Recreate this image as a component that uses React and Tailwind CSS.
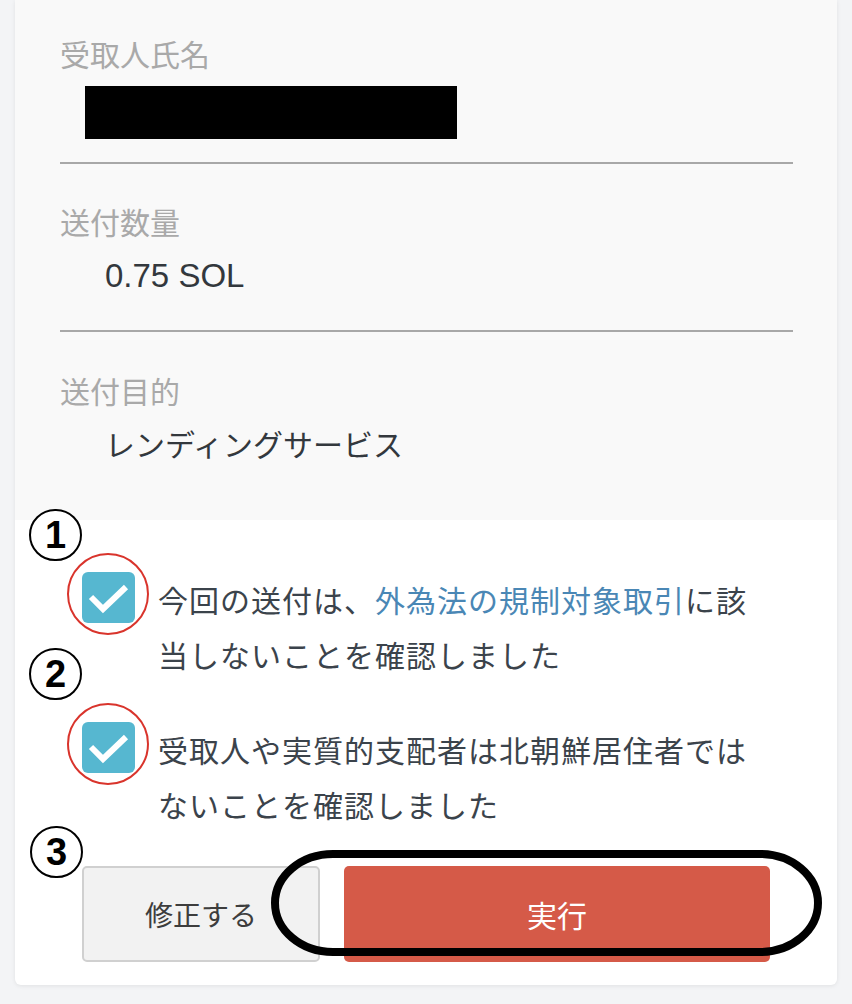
import React from "react";

const jp = "font-['Noto_Sans_CJK_JP',sans-serif]";

function Marker({ n, className }) {
  return (
    <div
      className={`absolute flex h-[52px] w-[53px] items-center justify-center rounded-full border-2 border-black bg-white font-['Liberation_Sans',sans-serif] text-[38px] font-bold leading-none text-black ${className}`}
    >
      {n}
    </div>
  );
}

function CheckBox() {
  return (
    <div className="relative h-[51px] w-[53px] shrink-0">
      <div className="h-full w-full rounded-[6px] bg-[#56b7d0]">
        <svg width="53" height="51" viewBox="0 0 53 51">
          <polyline
            points="9,25 21,37 44,15"
            fill="none"
            stroke="white"
            strokeWidth="6"
            strokeLinejoin="miter"
          />
        </svg>
      </div>
      <div className="absolute left-[-15px] top-[-19px] h-[82px] w-[82px] rounded-full border-2 border-[#d9342c]" />
    </div>
  );
}

function Label({ children, className = "" }) {
  return (
    <div className={`text-[30px] leading-[40px] text-[#a9a9a9] ${jp} ${className}`}>{children}</div>
  );
}

export default function App() {
  return (
    <div className="min-h-screen w-full bg-[#f3f4f6] pb-[18px]">
      <div className="relative mx-[15px] rounded-b-[6px] bg-white shadow-[0_1px_4px_rgba(0,0,0,0.08)]">
        {/* details */}
        <div className="bg-[#f9f9f9] pl-[45px] pr-[44px] pt-[33px] pb-[57px]">
          <Label>受取人氏名</Label>
          <div className="ml-[25px] mt-[13px] h-[53px] w-[372px] bg-black" />
          <div className="mt-[23px] border-t-2 border-[#a8a8a8]" />

          <Label className="mt-[37px]">送付数量</Label>
          <div className="ml-[45px] mt-[15px] font-['Liberation_Sans',sans-serif] text-[33px] leading-[40px] text-[#33383d]">
            0.75 SOL
          </div>
          <div className="mt-[34px] border-t-2 border-[#a8a8a8]" />

          <Label className="mt-[38px]">送付目的</Label>
          <div className={`ml-[45px] mt-[13px] text-[30px] leading-[40px] text-[#33383d] ${jp}`}>
            レンディングサービス
          </div>
        </div>

        {/* confirmations */}
        <div className="pl-[67px] pt-[52px] pb-[23px]">
          <div className="flex items-start gap-[23px]">
            <CheckBox />
            <p className={`w-[600px] text-[30px] leading-[55px] tracking-[1px] text-[#3b434b] ${jp}`}>
              今回の送付は、<span className="text-[#4a87b5]">外為法の規制対象取引</span>に該当しないことを確認しました
            </p>
          </div>
          <div className="mt-[40px] flex items-start gap-[23px]">
            <CheckBox />
            <p className={`w-[600px] text-[30px] leading-[55px] tracking-[1px] text-[#3b434b] ${jp}`}>
              受取人や実質的支配者は北朝鮮居住者ではないことを確認しました
            </p>
          </div>

          <div className="relative mt-[34px] flex gap-[24px] pr-[67px]">
            <button
              className={`flex h-[96px] w-[238px] items-center justify-center rounded-[5px] border-2 border-[#d0d0d0] bg-[#f2f2f2] text-[28px] text-[#3d3d3d] ${jp}`}
            >
              修正する
            </button>
            <button
              className={`flex h-[96px] flex-1 items-center justify-center rounded-[5px] bg-[#d55a48] text-[30px] text-white ${jp}`}
            >
              実行
            </button>
            <svg
              className="pointer-events-none absolute left-[189px] top-[-16px]"
              width="551"
              height="106"
              viewBox="0 0 551 106"
            >
              <rect x="4" y="4" width="543" height="98" rx="58" ry="49" fill="none" stroke="black" strokeWidth="8" />
            </svg>
          </div>
        </div>

        <Marker n="1" className="left-[14px] top-[509px]" />
        <Marker n="2" className="left-[14px] top-[648px]" />
        <Marker n="3" className="left-[15px] top-[826px]" />
      </div>
    </div>
  );
}
